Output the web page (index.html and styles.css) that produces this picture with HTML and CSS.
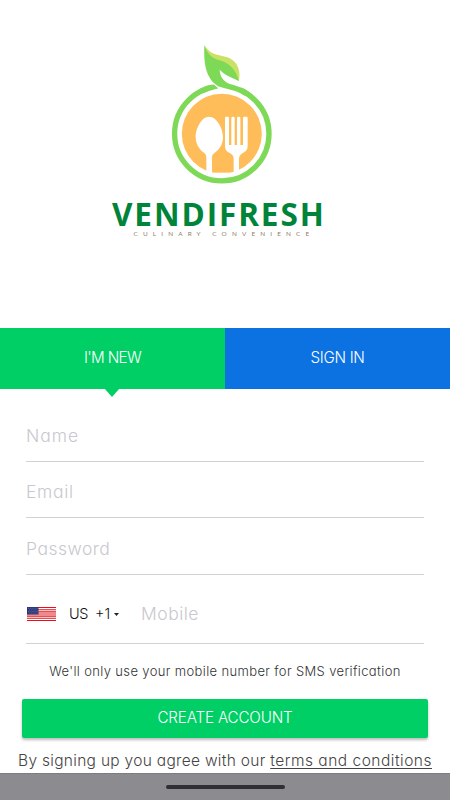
FILE: index.html
```html
<!DOCTYPE html>
<html lang="en">
<head>
<meta charset="utf-8">
<title>Vendifresh</title>
<link rel="stylesheet" href="styles.css">
</head>
<body>
<main class="screen">
  <header class="brand">
    <svg class="logo" viewBox="0 0 450 238" role="img" aria-label="Vendifresh">
      <circle cx="221.8" cy="133.7" r="47.2" fill="none" stroke="#7ed957" stroke-width="5.3"/>
      <circle cx="221.8" cy="133.7" r="40" fill="#ffbd59"/>
      <g transform="translate(160 35) scale(.33333)">
        <path fill="#fff" d="M153 140L174 160Q162 162 148 170L185 174Q215 170 240 178L244 155L210 120L150 120Z"/>
        <path fill="#7ed957" d="M133 31C131 84 136 129 174 154C202 164 224 164 254 182L270 173C250 155 223 153 201 143C184 132 180 119 179 104C193 120 214 127 237 138C238 91 211 76 177 65C156 58 143 49 133 31Z"/>
        <path fill="#7ed957" d="M120 161Q138 151 156 149L174 160Q151 163 130 175Z"/>
        <path fill="#c9e265" d="M133 31C147 55 163 58 190 64C224 70 245 96 237 138C226 99 205 84 178 76C153 68 141 55 133 31Z"/>
      </g>
      <g transform="translate(160 110) scale(.33333)" fill="#fff">
        <path d="M147 20C126 20 107 53 107 82C107 105 121 122 134 130Q139 134 139 142V190H156V142Q156 134 162 130C176 121 189 105 189 82C189 53 169 20 147 20Z"/>
        <path d="M195 24Q195 20 199 20H203Q207 20 207 24V105H214V24Q214 20 218 20H220Q224 20 224 24V105H231V24Q231 20 235 20H237Q241 20 241 24V105H249V24Q249 20 253 20H259Q263 20 263 24V108Q263 120 253 126L244 132Q237 137 237 146V188H221V146Q221 137 214 132L204 126Q195 120 195 108Z"/>
        <path d="M145 188H228V196H145Z"/>
      </g>
    </svg>
    <div class="wordmark">VENDIFRESH</div>
    <div class="tagline">CULINARY CONVENIENCE</div>
  </header>
  <nav class="tabs">
    <a class="tab active"><span class="tab-new">I'M NEW</span></a>
    <a class="tab"><span class="tab-sign">SIGN IN</span></a>
  </nav>
  <form class="form">
    <div class="field"><span class="name">Name</span></div>
    <div class="field"><span class="email">Email</span></div>
    <div class="field"><span class="password">Password</span></div>
    <div class="field phone">
      <svg class="flag" viewBox="0 0 29 14" aria-hidden="true">
        <path fill="#fff" d="M0 0H29V14H0Z"/>
        <path stroke="#e3141b" stroke-width="1.08" d="M0 .54H29M0 2.7H29M0 4.85H29M0 7H29M0 9.15H29M0 11.3H29M0 13.46H29"/>
        <path fill="#2b3578" d="M0 0H11.5V7.5H0Z"/>
        <path stroke="#9aa2d0" stroke-width=".6" stroke-dasharray=".7 1.2" d="M1 1.3H11M2 2.9H11M1 4.5H11M2 6.1H11"/>
      </svg>
      <span class="country">US</span>
      <span class="code">+1</span>
      <svg class="caret" viewBox="0 0 5 3" aria-hidden="true"><path fill="#222" d="M0 0H5L2.5 3Z"/></svg>
      <span class="mobile">Mobile</span>
    </div>
    <p class="hint"><span>We'll only use your mobile number for SMS verification</span></p>
    <div class="submit"><span>CREATE ACCOUNT</span></div>
    <p class="terms"><span>By signing up you agree with our <a>terms and conditions</a></span></p>
  </form>
  <footer class="navbar"><span class="handle"></span></footer>
</main>
</body>
</html>
```
FILE: styles.css
```css
* { box-sizing: border-box; }
body { margin: 0; background: #fff; }
.screen {
  width: 450px;
  height: 800px;
  display: flex;
  flex-direction: column;
  overflow: hidden;
  font-family: Inter, "Liberation Sans", sans-serif;
  font-weight: 300;
  font-feature-settings: "cv11", "ss03";
  white-space: nowrap;
}
.brand { height: 328px; flex: none; }
.logo { display: block; width: 450px; height: 238px; margin-bottom: -38px; }
.wordmark {
  height: 29px;
  padding-left: 112px;
  font: 700 31.5px/27px "Open Sans", sans-serif;
  letter-spacing: 1.9px;
  color: #00843a;
}
.tagline {
  height: 8px;
  padding-left: 133.5px;
  font: 400 6.4px/9px Lato, sans-serif;
  letter-spacing: 5.15px;
  color: #8f8064;
}
.tabs { display: flex; height: 61px; flex: none; }
.tab {
  position: relative;
  flex: 1;
  padding-bottom: 3px;
  display: flex;
  align-items: center;
  justify-content: center;
  background: #0c72e2;
  color: #fff;
  font-size: 15.2px;
}
.tab-new { letter-spacing: -0.65px; }
.tab-sign { letter-spacing: -0.3px; }
.active { background: #00cf66; }
.active::after {
  content: "";
  position: absolute;
  top: 60px;
  left: 104px;
  border: 8.5px solid transparent;
  border-top: 9px solid #00cf66;
  border-bottom: 0;
}
.form { height: 384px; flex: none; padding: 16px 22px 0; }
.field {
  height: 56.5px;
  margin: 0 4px;
  padding-top: 5px;
  display: flex;
  align-items: center;
  border-bottom: 1.5px solid #d2d2d5;
  color: #c8c8ce;
  font-size: 17.5px;
}
.name { letter-spacing: 0.95px; }
.email { letter-spacing: 0.7px; }
.password { letter-spacing: 0.5px; }
.mobile { letter-spacing: 0.5px; }
.phone { height: 69.5px; padding: 9px 0 0 1px; }
.flag { width: 29px; height: 14px; margin-top: 2px; }
.country, .code { color: #111; font-size: 14.5px; }
.country { width: 19px; margin-left: 13px; letter-spacing: -0.5px; }
.code { width: 15px; margin-left: 7px; }
.caret { width: 5px; height: 3px; margin: 3px 0 0 4px; }
.mobile { margin-left: 22px; }
.hint {
  height: 54.5px;
  margin: 0;
  display: flex;
  align-items: center;
  justify-content: center;
  color: #333;
  font-size: 13px;
  letter-spacing: 0.36px;
}
.submit {
  height: 39px;
  padding-bottom: 2px;
  display: flex;
  align-items: center;
  justify-content: center;
  border-radius: 2px;
  background: #00cf66;
  box-shadow: 0 2px 3px #0004;
  color: #fff;
  font-size: 15.2px;
  letter-spacing: -0.17px;
}
.terms {
  height: 35px;
  margin: 0 -10px;
  padding-top: 11px;
  display: flex;
  align-items: center;
  justify-content: center;
  color: #444;
  font-size: 15.5px;
  letter-spacing: 0.3px;
}
.terms a { letter-spacing: 0.5px; text-decoration: underline; text-decoration-thickness: 1px; text-underline-offset: 2px; }
.navbar {
  height: 27px;
  display: flex;
  align-items: center;
  justify-content: center;
  background: #8b8b90;
  border-top: 1px solid #7c7c82;
}
.handle { width: 119px; height: 4px; border-radius: 2px; background: #303033; }
```
